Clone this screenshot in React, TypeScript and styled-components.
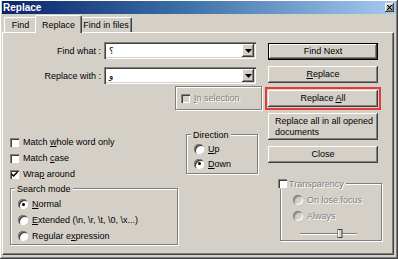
import React from 'react';
import styled, { createGlobalStyle, css } from 'styled-components';

const GlobalStyle = createGlobalStyle`
  * { box-sizing: border-box; }
  html, body { margin: 0; padding: 0; background: #d4d0c8; }
  body {
    font-family: "Liberation Sans", "DejaVu Sans", Arial, sans-serif;
    font-size: 9px;
    color: #000;
  }
`;

const raised = css`
  box-shadow: inset -1px -1px #404040, inset 1px 1px #fff, inset -2px -2px #808080, inset 2px 2px #d4d0c8;
`;

const sunken = css`
  box-shadow: inset 1px 1px #808080, inset 2px 2px #404040, inset -1px -1px #fff, inset -2px -2px #d4d0c8;
`;

const etched = css`
  border: 1px solid #808080;
  box-shadow: 1px 1px 0 #fff, inset 1px 1px 0 #fff;
`;

const Window = styled.div`
  width: 398px;
  height: 259px;
  padding: 1px 2px 4px;
  display: flex;
  flex-direction: column;
  background: #d4d0c8;
  ${raised}
`;

const TitleBar = styled.div`
  height: 13px;
  display: flex;
  align-items: center;
  justify-content: space-between;
  padding: 0 2px 0 1px;
  background: linear-gradient(to right, #0a246a 0%, #3a6ea5 45%, #a6caf0 100%);
`;

const TitleText = styled.span`
  color: #fff;
  font-weight: bold;
  font-size: 10px;
`;

const TitleClose = styled.span`
  width: 9px;
  height: 9px;
  display: flex;
  align-items: center;
  justify-content: center;
  background: #d4d0c8;
  ${raised}
`;

const TabStrip = styled.div`
  height: 18px;
  display: flex;
  align-items: flex-end;
  padding-left: 2px;
`;

const Tab = styled.div<{ $active?: boolean; $w: number }>`
  width: ${p => p.$w}px;
  height: 15px;
  display: flex;
  align-items: center;
  justify-content: center;
  background: #d4d0c8;
  border-top: 1px solid #fff;
  border-left: 1px solid #fff;
  border-right: 1px solid #404040;
  border-radius: 2px 2px 0 0;
  box-shadow: inset -1px 0 #808080;
  ${p => p.$active && css`
    height: 18px;
    margin: 0 -2px -1px;
    position: relative;
    z-index: 1;
  `}
`;

const Panel = styled.div`
  flex: 1;
  margin-right: 2px;
  display: grid;
  grid-template-columns: 252px 114px;
  column-gap: 6px;
  align-items: start;
  padding: 9px 0 0 7px;
  border-top: 1px solid #fff;
  border-left: 1px solid #fff;
  border-right: 1px solid #404040;
  border-bottom: 1px solid #404040;
  box-shadow: inset -1px -1px #808080;
`;

const LeftCol = styled.div`
  display: flex;
  flex-direction: column;
`;

const FieldRow = styled.div`
  display: flex;
  align-items: center;
  height: 17px;
  & + & { margin-top: 8px; }
`;

const FieldLabel = styled.label`
  width: 94px;
  padding-right: 3px;
  text-align: right;
`;

const Combo = styled.div`
  width: 152px;
  height: 17px;
  display: flex;
  align-items: center;
  padding: 2px;
  background: #fff;
  ${sunken}
`;

const ComboText = styled.span`
  flex: 1;
  padding-left: 3px;
  font-family: "DejaVu Sans", sans-serif;
  font-size: 9px;
`;

const DropButton = styled.span`
  width: 12px;
  height: 13px;
  display: flex;
  align-items: center;
  justify-content: center;
  background: #d4d0c8;
  ${raised}
`;

const Group = styled.div<{ $w: number; $h: number }>`
  width: ${p => p.$w}px;
  height: ${p => p.$h}px;
  display: flex;
  flex-direction: column;
  ${etched}
`;

const GroupTitle = styled.div<{ $shift?: number }>`
  align-self: flex-start;
  display: flex;
  align-items: center;
  gap: 2px;
  height: 11px;
  margin: -6px 0 0 ${p => p.$shift ?? 4}px;
  padding: 0 2px;
  background: #d4d0c8;
`;

const SelectionGroup = styled(Group)`
  margin: 2px 0 0 165px;
  flex-direction: row;
  align-items: center;
  padding-left: 5px;
`;

const Middle = styled.div`
  display: flex;
  height: 48px;
  margin-top: 24px;
`;

const CheckList = styled.div`
  width: 176px;
  display: flex;
  flex-direction: column;
`;

const Option = styled.label<{ $disabled?: boolean }>`
  display: flex;
  align-items: center;
  gap: 4px;
  height: 16px;
  ${p => p.$disabled && css`
    color: #808080;
    text-shadow: 1px 1px 0 #fff;
  `}
`;

const Options = styled.div<{ $pad: number; $top?: number; $row?: number }>`
  display: flex;
  flex-direction: column;
  padding: ${p => p.$top ?? 0}px 0 0 ${p => p.$pad}px;
  & > label { height: ${p => p.$row ?? 16}px; }
`;

const Box = styled.span<{ $gray?: boolean }>`
  width: 9px;
  height: 9px;
  flex: none;
  display: flex;
  align-items: center;
  justify-content: center;
  background: ${p => (p.$gray ? '#d4d0c8' : '#fff')};
  box-shadow: inset 1px 1px #808080, inset 2px 2px #404040, inset -1px -1px #fff;
`;

const Dot = styled.span<{ $checked?: boolean; $gray?: boolean }>`
  width: 10px;
  height: 10px;
  flex: none;
  border-radius: 50%;
  display: flex;
  align-items: center;
  justify-content: center;
  background: ${p => (p.$gray ? '#d4d0c8' : '#fff')};
  box-shadow: inset 1px 1px 0 #808080, inset 2px 2px 0 ${p => (p.$gray ? '#a0a0a0' : '#404040')}, inset -1px -1px 0 #fff;
  &::after {
    content: '';
    width: 3px;
    height: 3px;
    border-radius: 50%;
    background: #000;
    display: ${p => (p.$checked ? 'block' : 'none')};
  }
`;

const SearchGroup = styled(Group)`
  margin-top: 6px;
`;

const RightCol = styled.div`
  display: flex;
  flex-direction: column;
  gap: 6px;
  padding-top: 1px;
`;

const Button = styled.button<{ $default?: boolean; $tall?: boolean; $marked?: boolean }>`
  width: 110px;
  height: ${p => (p.$tall ? 27 : 17)}px;
  padding: 0;
  border: none;
  font: inherit;
  color: #000;
  background: #d4d0c8;
  line-height: 11px;
  ${raised}
  ${p => p.$default && css`
    box-shadow: inset 0 0 0 1px #000, inset -2px -2px #404040, inset 2px 2px #fff, inset -3px -3px #808080;
  `}
  ${p => p.$tall && css`
    text-align: left;
    padding-left: 7px;
    white-space: nowrap;
  `}
  ${p => p.$marked && css`
    margin-top: 1px;
    outline: 2px solid #e83a3a;
    outline-offset: 1px;
  `}
`;

const TransGroup = styled(Group)`
  margin: 14px 0 0 12px;
`;

const Slider = styled.svg`
  margin: 5px 0 0 19px;
`;

const Check = () => (
  <svg width="7" height="7" viewBox="0 0 7 7">
    <path d="M0.5 3 L2.5 5 L6.5 1" fill="none" stroke="#000" strokeWidth="1.5" />
  </svg>
);

const Arrow = () => (
  <svg width="7" height="4" viewBox="0 0 7 4">
    <path d="M0 0 H7 L3.5 4 Z" fill="#000" />
  </svg>
);

export default function App() {
  return (
    <>
      <GlobalStyle />
      <Window>
        <TitleBar>
          <TitleText>Replace</TitleText>
          <TitleClose>
            <svg width="5" height="5" viewBox="0 0 5 5">
              <path d="M0 0 L5 5 M5 0 L0 5" stroke="#000" strokeWidth="1.2" />
            </svg>
          </TitleClose>
        </TitleBar>
        <TabStrip>
          <Tab $w={33}>Find</Tab>
          <Tab $w={47} $active>Replace</Tab>
          <Tab $w={52}>Find in files</Tab>
        </TabStrip>
        <Panel>
          <LeftCol>
            <FieldRow>
              <FieldLabel>Find what :</FieldLabel>
              <Combo>
                <ComboText>؟</ComboText>
                <DropButton><Arrow /></DropButton>
              </Combo>
            </FieldRow>
            <FieldRow>
              <FieldLabel>Replace with :</FieldLabel>
              <Combo>
                <ComboText>و</ComboText>
                <DropButton><Arrow /></DropButton>
              </Combo>
            </FieldRow>
            <SelectionGroup $w={87} $h={24}>
              <Option $disabled>
                <Box $gray />
                <span><u>I</u>n selection</span>
              </Option>
            </SelectionGroup>
            <Middle>
              <CheckList>
                <Option><Box /><span>Match <u>w</u>hole word only</span></Option>
                <Option><Box /><span>Match <u>c</u>ase</span></Option>
                <Option><Box><Check /></Box><span>Wra<u>p</u> around</span></Option>
              </CheckList>
              <Group $w={72} $h={40}>
                <GroupTitle>Direction</GroupTitle>
                <Options $pad={7} $row={15} $top={1}>
                  <Option><Dot /><span><u>U</u>p</span></Option>
                  <Option><Dot $checked /><span><u>D</u>own</span></Option>
                </Options>
              </Group>
            </Middle>
            <SearchGroup $w={168} $h={57}>
              <GroupTitle>Search mode</GroupTitle>
              <Options $pad={7} $top={2}>
                <Option><Dot $checked /><span><u>N</u>ormal</span></Option>
                <Option><Dot /><span><u>E</u>xtended (\n, \r, \t, \0, \x...)</span></Option>
                <Option><Dot /><span>Regular e<u>x</u>pression</span></Option>
              </Options>
            </SearchGroup>
          </LeftCol>
          <RightCol>
            <Button $default>Find Next</Button>
            <Button><u>R</u>eplace</Button>
            <Button $marked>Replace <u>A</u>ll</Button>
            <Button $tall>Replace all in all opened<br />documents</Button>
            <Button>Close</Button>
            <TransGroup $w={102} $h={58}>
              <GroupTitle $shift={-5}>
                <Box />
                <Option as="span" $disabled>Transparency</Option>
              </GroupTitle>
              <Options $pad={12} $top={3}>
                <Option $disabled><Dot $gray /><span>On lose focus</span></Option>
                <Option $disabled><Dot $gray /><span>Always</span></Option>
              </Options>
              <Slider width="58" height="10" viewBox="0 0 58 10">
                <line x1="0" y1="4.5" x2="57" y2="4.5" stroke="#808080" />
                <line x1="0" y1="5.5" x2="57" y2="5.5" stroke="#fff" />
                <rect x="38" y="0.5" width="4" height="8" fill="#d4d0c8" stroke="#404040" />
                <line x1="38.5" y1="1" x2="38.5" y2="8" stroke="#fff" />
              </Slider>
            </TransGroup>
          </RightCol>
        </Panel>
      </Window>
    </>
  );
}
